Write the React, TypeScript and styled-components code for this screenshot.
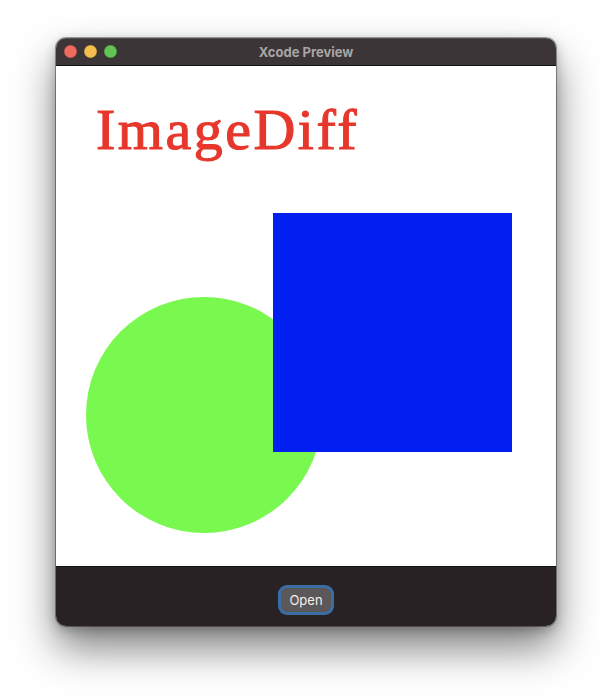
import React from "react";
import styled, { createGlobalStyle } from "styled-components";

const Global = createGlobalStyle`
  html, body { margin: 0; padding: 0; background: #ffffff; }
  body { font-family: "Inter", "Liberation Sans", sans-serif; }
`;

const Page = styled.div`
  width: 612px;
  height: 700px;
  display: flex;
  justify-content: center;
  padding-top: 38px;
  box-sizing: border-box;
`;

const Window = styled.div`
  width: 500px;
  height: 588px;
  border-radius: 10px;
  overflow: hidden;
  display: flex;
  flex-direction: column;
  box-shadow: 0 0 0 1px rgba(0, 0, 0, 0.35), 0 22px 42px rgba(0, 0, 0, 0.5),
    0 4px 12px rgba(0, 0, 0, 0.25);
`;

const TitleBar = styled.div`
  height: 27px;
  flex: none;
  background: #3b3537;
  border-bottom: 1px solid #121012;
  display: flex;
  align-items: center;
  position: relative;
  box-shadow: inset 0 1px 0 rgba(255, 255, 255, 0.12);
`;

const Lights = styled.div`
  display: flex;
  gap: 7px;
  padding-left: 8px;
`;

const Light = styled.span<{ $c: string }>`
  width: 13px;
  height: 13px;
  border-radius: 50%;
  background: ${(p) => p.$c};
  box-shadow: inset 0 0 0 0.5px rgba(0, 0, 0, 0.25);
`;

const Title = styled.div`
  position: absolute;
  left: 0;
  right: 0;
  text-align: center;
  font-family: "Inter", "Liberation Sans", sans-serif;
  font-weight: 700;
  font-size: 13px;
  color: #a9a5a6;
  pointer-events: none;
`;

const Canvas = styled.div`
  position: relative;
  height: 500px;
  flex: none;
  background: #ffffff;
  padding: 35px 0 0 40px;
  box-sizing: border-box;
`;

const Heading = styled.div`
  position: relative;
  z-index: 1;
  font-family: "Liberation Serif", "Times New Roman", serif;
  font-size: 58px;
  line-height: 58px;
  letter-spacing: 2.5px;
  color: #e7372c;
  -webkit-text-stroke: 1.1px #e7372c;
`;

const Shapes = styled.svg`
  position: absolute;
  left: 0;
  top: 0;
`;

const BottomBar = styled.div`
  flex: 1;
  background: #282224;
  border-top: 1px solid #141112;
  display: flex;
  align-items: center;
  justify-content: center;
`;

const OpenButton = styled.button`
  height: 24px;
  padding: 0 8px;
  border-radius: 6px;
  border: none;
  background: #5c5758;
  color: #f2f0f0;
  font-family: "Inter", "Liberation Sans", sans-serif;
  font-size: 13px;
  line-height: 24px;
  box-shadow: 0 0 0 3px #3b6ea6;
  margin-top: 7px;
  cursor: default;
`;

export default function App() {
  return (
    <>
      <Global />
      <Page>
        <Window>
          <TitleBar>
            <Lights>
              <Light $c="#ee6a5f" />
              <Light $c="#f5bf4f" />
              <Light $c="#61c454" />
            </Lights>
            <Title>Xcode Preview</Title>
          </TitleBar>
          <Canvas>
            <Shapes width="500" height="500" viewBox="0 0 500 500">
              <circle cx="148" cy="349" r="118" fill="#79f84f" />
              <rect x="217" y="147" width="239" height="239" fill="#001ff0" />
            </Shapes>
            <Heading>ImageDiff</Heading>
          </Canvas>
          <BottomBar>
            <OpenButton>Open</OpenButton>
          </BottomBar>
        </Window>
      </Page>
    </>
  );
}
